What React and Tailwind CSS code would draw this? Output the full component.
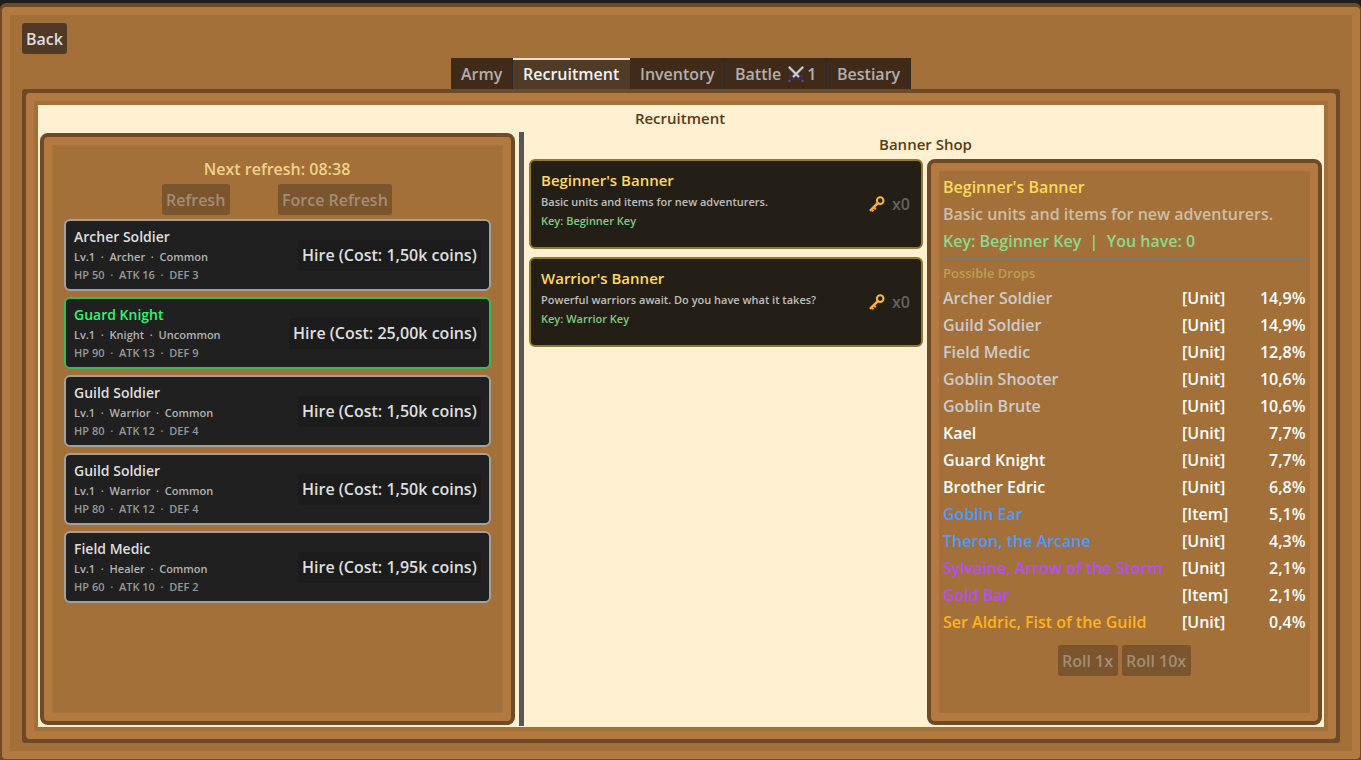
/**
 * App.jsx - Guild recruitment screen
 */

import { useState } from 'react';

const TABS = [
    { label: 'Army', width: 'w-[62px]' },
    { label: 'Recruitment', width: 'w-[117px]' },
    { label: 'Inventory', width: 'w-[95px]' },
    { label: 'Battle', width: 'w-[102px]', badge: 1 },
    { label: 'Bestiary', width: 'w-[84px]' },
];

const RECRUITS = [
    { name: 'Archer Soldier', job: 'Archer', rarity: 'Common', hp: 50, atk: 16, def: 3, cost: '1,50k' },
    { name: 'Guard Knight', job: 'Knight', rarity: 'Uncommon', hp: 90, atk: 13, def: 9, cost: '25,00k' },
    { name: 'Guild Soldier', job: 'Warrior', rarity: 'Common', hp: 80, atk: 12, def: 4, cost: '1,50k' },
    { name: 'Guild Soldier', job: 'Warrior', rarity: 'Common', hp: 80, atk: 12, def: 4, cost: '1,50k' },
    { name: 'Field Medic', job: 'Healer', rarity: 'Common', hp: 60, atk: 10, def: 2, cost: '1,95k' },
];

const DROPS = [
    { name: 'Archer Soldier', type: 'Unit', chance: '14,9%', color: 'text-[#cccccc]' },
    { name: 'Guild Soldier', type: 'Unit', chance: '14,9%', color: 'text-[#cccccc]' },
    { name: 'Field Medic', type: 'Unit', chance: '12,8%', color: 'text-[#cccccc]' },
    { name: 'Goblin Shooter', type: 'Unit', chance: '10,6%', color: 'text-[#cccccc]' },
    { name: 'Goblin Brute', type: 'Unit', chance: '10,6%', color: 'text-[#cccccc]' },
    { name: 'Kael', type: 'Unit', chance: '7,7%', color: 'text-white' },
    { name: 'Guard Knight', type: 'Unit', chance: '7,7%', color: 'text-white' },
    { name: 'Brother Edric', type: 'Unit', chance: '6,8%', color: 'text-white' },
    { name: 'Goblin Ear', type: 'Item', chance: '5,1%', color: 'text-[#4d99ff]' },
    { name: 'Theron, the Arcane', type: 'Unit', chance: '4,3%', color: 'text-[#4d99ff]' },
    { name: 'Sylvaine, Arrow of the Storm', type: 'Unit', chance: '2,1%', color: 'text-[#b34dff]' },
    { name: 'Gold Bar', type: 'Item', chance: '2,1%', color: 'text-[#b34dff]' },
    { name: 'Ser Aldric, Fist of the Guild', type: 'Unit', chance: '0,4%', color: 'text-[#ffb31a]' },
];

const BANNERS = [
    { name: "Beginner's Banner", text: 'Basic units and items for new adventurers.', item: 'Beginner Key' },
    { name: "Warrior's Banner", text: 'Powerful warriors await. Do you have what it takes?', item: 'Warrior Key' },
];

function Swords() {
    return (
        <svg className="mr-[3px] ml-[7px] h-4 w-4 shrink-0" viewBox="0 0 16 16" fill="none">
            <path d="M1.5 9.5l5 4.5M14.5 9.5l-5 4.5" stroke="#49316d" strokeWidth="2" />
            <path d="M5 11l-4 3.5M11 11l4 3.5" stroke="#3a2859" strokeWidth="2.4" />
            <path d="M0.8 0.8l10.2 10.2M15.2 0.8L5 11" stroke="#85898c" strokeWidth="2.8" />
            <path d="M1 1l10 10M15 1L5 11" stroke="#d6d6d6" strokeWidth="1.5" />
            <path d="M0.5 14h2v2h-2zM13.5 14h2v2h-2z" fill="#5750a0" />
        </svg>
    );
}

function Key() {
    return (
        <svg className="h-4 w-4 shrink-0" viewBox="0 0 16 16" fill="none">
            <circle cx="11.2" cy="4.6" r="3.3" stroke="#fcb936" strokeWidth="2" />
            <path d="M9 7L1 14.8" stroke="#fcb22f" strokeWidth="2.5" />
            <path d="M4.8 11.2l2 2M2.4 13.2l2 2" stroke="#f8a52b" strokeWidth="2" />
        </svg>
    );
}

function WoodButton({ className, children }) {
    return (
        <button
            disabled
            className={`h-[31px] rounded-[3px] bg-[#7a552e] pl-1 text-left leading-[32px] whitespace-nowrap text-[#a58d73] ${className}`}
        >
            {children}
        </button>
    );
}

function WoodPanel({ className, children }) {
    return (
        <div className={`rounded-lg border-4 border-[#6e4a26] bg-[#6e4a26] ${className}`}>
            <div className="h-full rounded-[4px] border-8 border-[#b27a40] bg-[#a37039]">{children}</div>
        </div>
    );
}

function RecruitCard({ unit }) {
    const uncommon = unit.rarity === 'Uncommon';

    return (
        <div
            className={`flex h-[72px] items-center justify-between rounded-md border-2 bg-[#202020] pr-2 pl-2 ${
                uncommon ? 'border-[#3bb857]' : 'border-[#a6a09a]'
            }`}
        >
            <div className="whitespace-pre text-[11px] leading-[18px]">
                <div className={`mb-px text-sm leading-[21px] ${uncommon ? 'text-[#33f573]' : 'text-[#dfdfdf]'}`}>{unit.name}</div>
                <div className="text-[#b3b3b3]">{`Lv.1  ·  ${unit.job}  ·  ${unit.rarity}`}</div>
                <div className="text-[#999999]">{`HP ${unit.hp}  ·  ATK ${unit.atk}  ·  DEF ${unit.def}`}</div>
            </div>
            <button
                className={`h-[31px] rounded-[3px] bg-[#1c1c1c] pl-1 text-left leading-[31px] whitespace-nowrap text-[#dfdfdf] ${
                    uncommon ? 'w-[192px]' : 'w-[183px]'
                }`}
            >
                Hire (Cost: {unit.cost} coins)
            </button>
        </div>
    );
}

function BannerCard({ banner, onSelect }) {
    return (
        <div
            onClick={onSelect}
            className="flex h-[90px] items-center justify-between rounded-md border-2 border-[#93792d] bg-[#241f16] pr-[11px] pl-2.5"
        >
            <div className="-mt-2.5 text-[11px] leading-[19px]">
                <div className="text-[15px] leading-[23px] text-[#ffd95c]">{banner.name}</div>
                <div className="text-[#bfbfbf]">{banner.text}</div>
                <div className="text-[#80cc80]">Key: {banner.item}</div>
            </div>
            <div className="flex items-center gap-[7px] text-[#666460]">
                <Key />
                <span>x0</span>
            </div>
        </div>
    );
}

function BannerDetails({ banner }) {
    return (
        <WoodPanel className="w-[395px]">
            <div className="flex flex-col px-1 pt-[3px] leading-[27px]">
                <div className="text-[#ffd95c]">{banner.name}</div>
                <div className="text-[#ccbfa8]">{banner.text}</div>
                <div className="whitespace-pre text-[#8cd98c]">{`Key: ${banner.item}  |  You have: 0`}</div>
                <div className="mt-[3px] -ml-px h-px bg-[#7d7b78]" />
                <div className="mt-1 text-[13px] leading-[20px] text-[#bd9f52]">Possible Drops</div>
                <div className="mt-0.5">
                    {DROPS.map((drop) => (
                        <div key={drop.name} className="flex text-white">
                            <span className={`w-[239px] ${drop.color}`}>{drop.name}</span>
                            <span>[{drop.type}]</span>
                            <span className="mr-[0.5px] ml-auto">{drop.chance}</span>
                        </div>
                    ))}
                </div>
                <div className="mt-[3px] -ml-px h-px bg-[#85755f]" />
                <div className="mt-[5px] flex justify-center gap-1">
                    <WoodButton className="w-[60px]">Roll 1x</WoodButton>
                    <WoodButton className="w-[69px]">Roll 10x</WoodButton>
                </div>
            </div>
        </WoodPanel>
    );
}

export default function App() {
    const [tab, setTab] = useState('Recruitment');
    const [selected, setSelected] = useState(0);

    return (
        <div className="h-[760px] w-[1361px] overflow-hidden bg-[#1e1e1e] pt-[3px] font-['Open_Sans',sans-serif] text-base font-semibold">
            <div className="h-[757px] rounded-t-md border-t-4 border-r border-b border-l-2 border-[#6e4a26] bg-[#6e4a26]">
                <div className="flex h-full flex-col rounded-[4px] border-8 border-[#b27a40] bg-[#a37039] px-3 pt-2 pb-2">
                    <button className="h-[31px] w-[45px] shrink-0 rounded-[3px] bg-[#503a26] leading-[32px] text-[#dfdfdf]">
                        Back
                    </button>

                    <div className="mt-1 flex h-[31px] shrink-0 justify-center">
                        {TABS.map((t) => (
                            <button
                                key={t.label}
                                onClick={() => setTab(t.label)}
                                className={`flex items-center pl-2.5 ${t.width} ${
                                    tab === t.label
                                        ? 'border-t-2 border-[#f0dfc6] bg-[#503a28] pb-0.5 text-[#f2f2f2]'
                                        : 'border-r border-[#2d2925] bg-[#402b1a] text-[#b3afaa]'
                                }`}
                            >
                                {t.label}
                                {t.badge && (
                                    <>
                                        <Swords />
                                        {t.badge}
                                    </>
                                )}
                            </button>
                        ))}
                    </div>

                    <div className="h-[654px] shrink-0 rounded-[3px] border-4 border-[#6e4a26] bg-[#6e4a26]">
                        <div className="h-full rounded-[4px] border-8 border-[#b27a40] bg-[#a37039] p-1">
                            <div className="flex h-full flex-col bg-[#fff0d2] px-0.5">
                                <h1 className="h-[27px] pr-0.5 text-center text-[15px] leading-[27px] text-[#593a14]">Recruitment</h1>

                                <div className="flex h-[594px]">
                                    <WoodPanel className="mt-px mb-px w-[475px]">
                                        <div className="flex h-full flex-col px-3 pt-[11px] shadow-[inset_0_0_2px_#b27a40]">
                                            <div className="pr-px text-center leading-[27px] text-[#f2d18c]">Next refresh: 08:38</div>
                                            <div className="mt-px flex justify-center gap-12 pr-px">
                                                <WoodButton className="w-[68px]">Refresh</WoodButton>
                                                <WoodButton className="w-[114px]">Force Refresh</WoodButton>
                                            </div>
                                            <div className="mt-1 flex flex-col gap-1.5">
                                                {RECRUITS.map((unit, i) => (
                                                    <RecruitCard key={i} unit={unit} />
                                                ))}
                                            </div>
                                        </div>
                                    </WoodPanel>

                                    <div className="mr-[5px] ml-1 w-[5px] bg-[#575757]" />

                                    <div className="flex flex-1 flex-col">
                                        <h2 className="h-[27px] text-center text-[15px] leading-[24px] text-[#593a14]">Banner Shop</h2>
                                        <div className="flex h-[566px] gap-1">
                                            <div className="flex flex-1 flex-col gap-2">
                                                {BANNERS.map((banner, i) => (
                                                    <BannerCard key={banner.name} banner={banner} onSelect={() => setSelected(i)} />
                                                ))}
                                            </div>
                                            <BannerDetails banner={BANNERS[selected]} />
                                        </div>
                                    </div>
                                </div>
                            </div>
                        </div>
                    </div>
                </div>
            </div>
        </div>
    );
}
